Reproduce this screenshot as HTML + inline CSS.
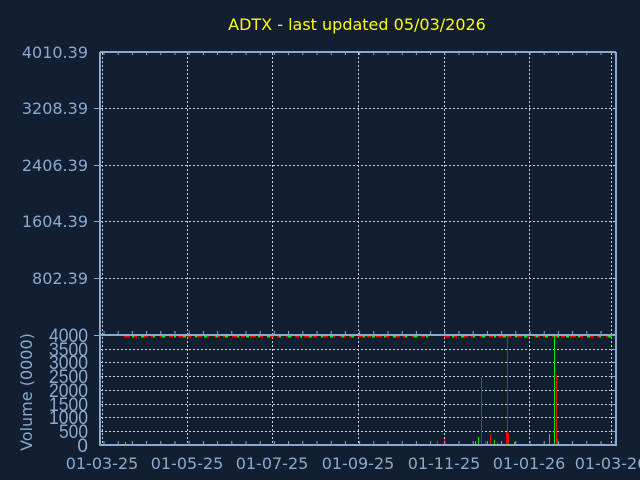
<!DOCTYPE html>
<html><head><meta charset="utf-8"><style>
html,body{margin:0;padding:0;background:#111f30;}
svg{display:block}
text{font-family:"DejaVu Sans","Liberation Sans",sans-serif;}
</style></head><body>
<svg width="640" height="480" xmlns="http://www.w3.org/2000/svg">
<rect width="640" height="480" fill="#111f30"/>
<text x="357" y="30" fill="#ffff00" font-size="16" text-anchor="middle">ADTX - last updated 05/03/2026</text>
<g fill="#8aaad0" font-size="16" text-anchor="end">
<text x="88" y="58">4010.39</text>
<text x="88" y="114">3208.39</text>
<text x="88" y="171">2406.39</text>
<text x="88" y="227">1604.39</text>
<text x="88" y="284">802.39</text>
</g>
<g fill="#8aaad0" font-size="19" text-anchor="end">
<text style="font-family:'Liberation Sans',sans-serif" x="88" y="342" textLength="39" lengthAdjust="spacingAndGlyphs">4000</text>
<text style="font-family:'Liberation Sans',sans-serif" x="88" y="356" textLength="39" lengthAdjust="spacingAndGlyphs">3500</text>
<text style="font-family:'Liberation Sans',sans-serif" x="88" y="369" textLength="39" lengthAdjust="spacingAndGlyphs">3000</text>
<text style="font-family:'Liberation Sans',sans-serif" x="88" y="383" textLength="39" lengthAdjust="spacingAndGlyphs">2500</text>
<text style="font-family:'Liberation Sans',sans-serif" x="88" y="397" textLength="39" lengthAdjust="spacingAndGlyphs">2000</text>
<text style="font-family:'Liberation Sans',sans-serif" x="88" y="411" textLength="39" lengthAdjust="spacingAndGlyphs">1500</text>
<text style="font-family:'Liberation Sans',sans-serif" x="88" y="424" textLength="39" lengthAdjust="spacingAndGlyphs">1000</text>
<text style="font-family:'Liberation Sans',sans-serif" x="88" y="438" textLength="29" lengthAdjust="spacingAndGlyphs">500</text>
<text style="font-family:'Liberation Sans',sans-serif" x="88" y="452">0</text>
</g>
<text transform="translate(32,392) rotate(-90)" fill="#8aaad0" font-size="16" text-anchor="middle">Volume (0000)</text>
<g fill="#8aaad0" font-size="16" text-anchor="middle">
<text x="102" y="469">01-03-25</text>
<text x="187" y="469">01-05-25</text>
<text x="272" y="469">01-07-25</text>
<text x="358" y="469">01-09-25</text>
<text x="444" y="469">01-11-25</text>
<text x="529" y="469">01-01-26</text>
<text x="611" y="469">01-03-26</text>
</g>
<g stroke="#c8d0d8" stroke-width="1" stroke-dasharray="2,2" fill="none">
<line x1="102.5" y1="53" x2="102.5" y2="445"/>
<line x1="187.5" y1="53" x2="187.5" y2="445"/>
<line x1="272.5" y1="53" x2="272.5" y2="445"/>
<line x1="358.5" y1="53" x2="358.5" y2="445"/>
<line x1="444.5" y1="53" x2="444.5" y2="445"/>
<line x1="529.5" y1="53" x2="529.5" y2="445"/>
<line x1="611.5" y1="53" x2="611.5" y2="445"/>
<line x1="101" y1="108.5" x2="616" y2="108.5"/>
<line x1="101" y1="165.5" x2="616" y2="165.5"/>
<line x1="101" y1="221.5" x2="616" y2="221.5"/>
<line x1="101" y1="278.5" x2="616" y2="278.5"/>
<line x1="101" y1="349.5" x2="616" y2="349.5"/>
<line x1="101" y1="362.5" x2="616" y2="362.5"/>
<line x1="101" y1="376.5" x2="616" y2="376.5"/>
<line x1="101" y1="390.5" x2="616" y2="390.5"/>
<line x1="101" y1="404.5" x2="616" y2="404.5"/>
<line x1="101" y1="417.5" x2="616" y2="417.5"/>
<line x1="101" y1="431.5" x2="616" y2="431.5"/>
</g>
<line x1="124" y1="336.5" x2="430" y2="336.5" stroke="#ff0000" stroke-width="2" stroke-dasharray="6,3,4,5"/>
<line x1="124" y1="336.5" x2="430" y2="336.5" stroke="#00ee00" stroke-width="2" stroke-dasharray="3,9,2,7" stroke-dashoffset="4"/>
<line x1="444" y1="336.5" x2="616" y2="336.5" stroke="#ff0000" stroke-width="2" stroke-dasharray="6,3,4,5"/>
<line x1="444" y1="336.5" x2="616" y2="336.5" stroke="#00ee00" stroke-width="2" stroke-dasharray="3,9,2,7" stroke-dashoffset="4"/>
<g stroke-width="1">
<line x1="481.5" y1="376" x2="481.5" y2="445" stroke="#ff0000"/>
<line x1="507.5" y1="336" x2="507.5" y2="445" stroke="#ff0000"/>
<line x1="554.5" y1="336" x2="554.5" y2="445" stroke="#00ee00"/>
<line x1="556.5" y1="375" x2="556.5" y2="445" stroke="#ff0000"/>
<line x1="478.5" y1="437" x2="478.5" y2="445" stroke="#00ee00"/>
<line x1="490.5" y1="434" x2="490.5" y2="445" stroke="#ff0000"/>
<line x1="506.5" y1="432" x2="506.5" y2="445" stroke="#ff0000"/>
<line x1="508.5" y1="433" x2="508.5" y2="445" stroke="#ff0000"/>
<line x1="549.5" y1="434" x2="549.5" y2="445" stroke="#00ee00"/>
<line x1="557.5" y1="439" x2="557.5" y2="445" stroke="#ff0000"/>
<line x1="437.5" y1="441" x2="437.5" y2="445" stroke="#ff0000"/>
<line x1="444.5" y1="439" x2="444.5" y2="445" stroke="#ff0000"/>
<line x1="475.5" y1="441" x2="475.5" y2="445" stroke="#00ee00"/>
<line x1="485.5" y1="441" x2="485.5" y2="445" stroke="#ff0000"/>
<line x1="494.5" y1="440" x2="494.5" y2="445" stroke="#00ee00"/>
<line x1="497.5" y1="442" x2="497.5" y2="445" stroke="#ff0000"/>
<line x1="514.5" y1="442" x2="514.5" y2="445" stroke="#00ee00"/>
<line x1="125.5" y1="442" x2="125.5" y2="445" stroke="#00ee00"/>
</g>
<g stroke="#8aaad0" stroke-width="2" fill="none">
<line x1="100" y1="52" x2="100" y2="446"/>
<line x1="616" y1="52" x2="616" y2="446"/>
<line x1="100" y1="52" x2="616" y2="52"/>
<line x1="100" y1="335" x2="616" y2="335"/>
<line x1="100" y1="445" x2="616" y2="445"/>
</g>
<g stroke="#8aaad0" stroke-width="4" stroke-dasharray="1,13.2">
<line x1="103.5" y1="53" x2="616" y2="53"/>
<line x1="103.5" y1="333" x2="616" y2="333"/>
<line x1="103.5" y1="443" x2="616" y2="443"/>
</g>
<g stroke="#8aaad0" stroke-width="1">
<line x1="94" y1="108.5" x2="100" y2="108.5"/>
<line x1="94" y1="165.5" x2="100" y2="165.5"/>
<line x1="94" y1="221.5" x2="100" y2="221.5"/>
<line x1="94" y1="278.5" x2="100" y2="278.5"/>
<line x1="94" y1="335.5" x2="100" y2="335.5"/>
<line x1="610" y1="349.5" x2="616" y2="349.5"/>
<line x1="610" y1="362.5" x2="616" y2="362.5"/>
<line x1="610" y1="376.5" x2="616" y2="376.5"/>
<line x1="610" y1="390.5" x2="616" y2="390.5"/>
<line x1="610" y1="404.5" x2="616" y2="404.5"/>
<line x1="610" y1="417.5" x2="616" y2="417.5"/>
<line x1="610" y1="431.5" x2="616" y2="431.5"/>
</g>
</svg>
</body></html>
